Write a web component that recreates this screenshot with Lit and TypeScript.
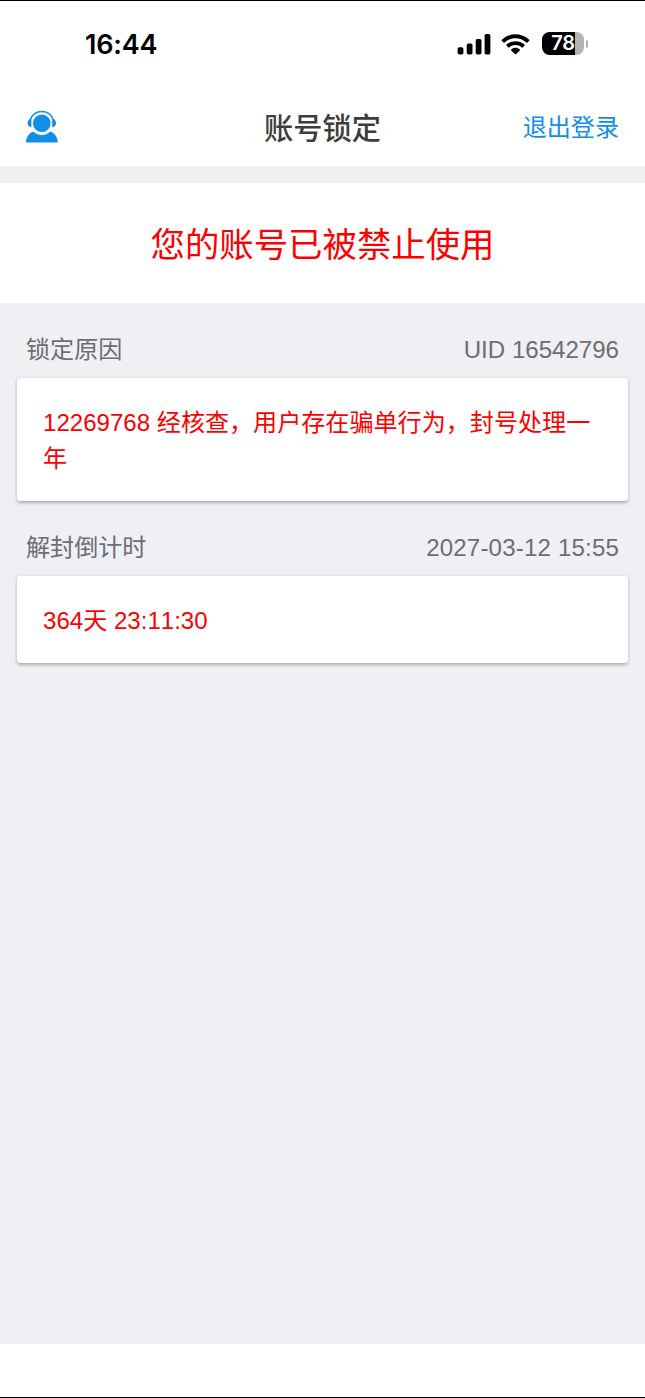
import { LitElement, html, css } from "lit";
import { customElement, property } from "lit/decorators.js";

@customElement("status-bar")
class StatusBar extends LitElement {
  static styles = css`
    :host {
      display: flex;
      justify-content: space-between;
      align-items: center;
      box-sizing: border-box;
      height: 87px;
      padding: 0 57px 0 85px;
      color: #000;
      font-family: Inter, sans-serif;
    }
    .time {
      font-size: 27px;
      font-weight: 600;
      line-height: 32px;
      letter-spacing: -0.2px;
    }
    .icons {
      display: flex;
      align-items: center;
      padding-bottom: 2px;
    }
    .icons svg {
      display: block;
    }
    .wifi {
      margin-left: 10px;
    }
    .battery {
      display: flex;
      align-items: center;
      margin-left: 12px;
    }
    .cell {
      box-sizing: border-box;
      width: 42px;
      height: 23px;
      border-radius: 7.5px;
      background: linear-gradient(90deg, #000 33px, #b3b3b3 33px);
      color: #fff;
      font-size: 20px;
      font-weight: 600;
      line-height: 23px;
      letter-spacing: -0.3px;
      text-align: center;
    }
    .cap {
      width: 2.5px;
      height: 8px;
      margin-left: 1.5px;
      border-radius: 0 3px 3px 0;
      background: #b3b3b3;
    }
  `;

  render() {
    return html`
      <span class="time">16:44</span>
      <div class="icons">
        <svg width="34" height="22" viewBox="0 0 34 22">
          <rect x="0.6" y="14.2" width="5.8" height="7.3" rx="1.7" />
          <rect x="9.7" y="10.5" width="5.8" height="11" rx="1.7" />
          <rect x="18.7" y="6" width="5.8" height="15.5" rx="1.7" />
          <rect x="27.6" y="1" width="5.8" height="20.5" rx="1.7" />
        </svg>
        <svg class="wifi" width="29" height="22" viewBox="0 0 29 22">
          <path d="M0.8 6.8C8.5-.6 20.500-.6 28.200 6.800Q28.700 7.300 28.200 7.800L26.400 9.600Q25.900 10 25.400 9.600C19 3.900 10 3.900 3.600 9.600Q3.100 10 2.600 9.600L.8 7.800Q.3 7.300.8 6.800Z" />
          <path d="M5.500 11.600C10.500 7 18.500 7 23.500 11.600Q24 12.100 23.500 12.600L21.700 14.400Q21.200 14.800 20.700 14.400C17.200 11.300 11.800 11.300 8.300 14.400Q7.800 14.800 7.300 14.400L5.500 12.600Q5 12.100 5.500 11.600Z" />
          <path d="M10.200 16.400C12.700 14.200 16.300 14.200 18.800 16.400Q19.300 16.900 18.800 17.400L15.100 21.100Q14.500 21.600 13.900 21.100L10.200 17.400Q9.700 16.900 10.200 16.400Z" />
        </svg>
        <div class="battery">
          <div class="cell">78</div>
          <div class="cap"></div>
        </div>
      </div>
    `;
  }
}

@customElement("info-section")
class InfoSection extends LitElement {
  @property() label = "";
  @property() value = "";
  @property() content = "";

  static styles = css`
    :host {
      display: block;
      padding: 0 17.2px;
      font-kerning: none;
    }
    .caption {
      display: flex;
      justify-content: space-between;
      box-sizing: border-box;
      height: 75px;
      padding: 28.5px 8.8px 0;
      color: #6d6d72;
      line-height: 36px;
    }
    .card {
      padding: 26.6px 25.8px 24.6px;
      border-radius: 3.5px;
      background: #fff;
      box-shadow: 0 1.7px 3.4px rgba(0, 0, 0, 0.28);
      color: #fa0000;
      line-height: 36px;
    }
    .date {
      letter-spacing: 0.17px;
    }
  `;

  render() {
    const valueClass = this.value.includes("-") ? "date" : "";
    return html`
      <div class="caption"><span>${this.label}</span><span class=${valueClass}>${this.value}</span></div>
      <div class="card">${this.content}</div>
    `;
  }
}

@customElement("app-root")
class AppRoot extends LitElement {
  static styles = css`
    :host {
      display: flex;
      flex-direction: column;
      box-sizing: border-box;
      height: 1398px;
      border-top: 1px solid #000;
      border-bottom: 1px solid #000;
      background: #fff;
      font-family: "Liberation Sans", "Noto Sans CJK SC", sans-serif;
      font-size: 24.08px;
    }
    .nav {
      display: grid;
      grid-template-columns: 1fr auto 1fr;
      align-items: center;
      height: 78px;
      padding: 0 26px;
    }
    .avatar {
      display: block;
      padding-bottom: 1px;
    }
    .title {
      padding-top: 4px;
      color: #3d3d40;
      font-size: 29.24px;
      font-weight: 500;
      line-height: 40px;
    }
    .logout {
      justify-self: end;
      padding-top: 1px;
      color: #108ee9;
      line-height: 36px;
    }
    .page {
      flex: 1;
      padding-top: 17px;
      background: #efeff4;
    }
    .notice {
      box-sizing: border-box;
      height: 120px;
      padding-top: 2px;
      background: #fff;
      color: #fa0000;
      font-size: 34.4px;
      line-height: 120px;
      text-align: center;
    }
    .home {
      height: 53px;
    }
  `;

  render() {
    return html`
      <status-bar></status-bar>
      <div class="nav">
        <svg class="avatar" width="32" height="33" viewBox="0 0 32 33">
          <g fill="#108ee9">
            <circle cx="15.800" cy="13.200" r="8.800" />
            <path d="M0 32.500C.2 27 3 23.200 7.300 21.600C11.800 26.300 19.800 26.300 24.300 21.600C28.800 23.200 31.600 27 31.800 32.500Z" />
            <path d="M5.400 8.500V17.200C3 17.200 1.600 15.300 1.600 13C1.600 10.700 3 8.800 5.400 8.500Z" />
            <path d="M26.200 8.500V17.200C28.600 17.200 30 15.300 30 13C30 10.700 28.600 8.800 26.200 8.500Z" />
          </g>
          <path d="M4.300 9.800C6.300 4.400 10.500 1.500 15.800 1.500C21.100 1.500 25.300 4.400 27.300 9.800" fill="none" stroke="#108ee9" stroke-width="1.500" />
        </svg>
        <span class="title">账号锁定</span>
        <span class="logout">退出登录</span>
      </div>
      <div class="page">
        <div class="notice">您的账号已被禁止使用</div>
        <info-section
          label="锁定原因"
          value="UID 16542796"
          content="12269768 经核查，用户存在骗单行为，封号处理一年"
        ></info-section>
        <info-section
          label="解封倒计时"
          value="2027-03-12 15:55"
          content="364天 23:11:30"
        ></info-section>
      </div>
      <div class="home"></div>
    `;
  }
}
